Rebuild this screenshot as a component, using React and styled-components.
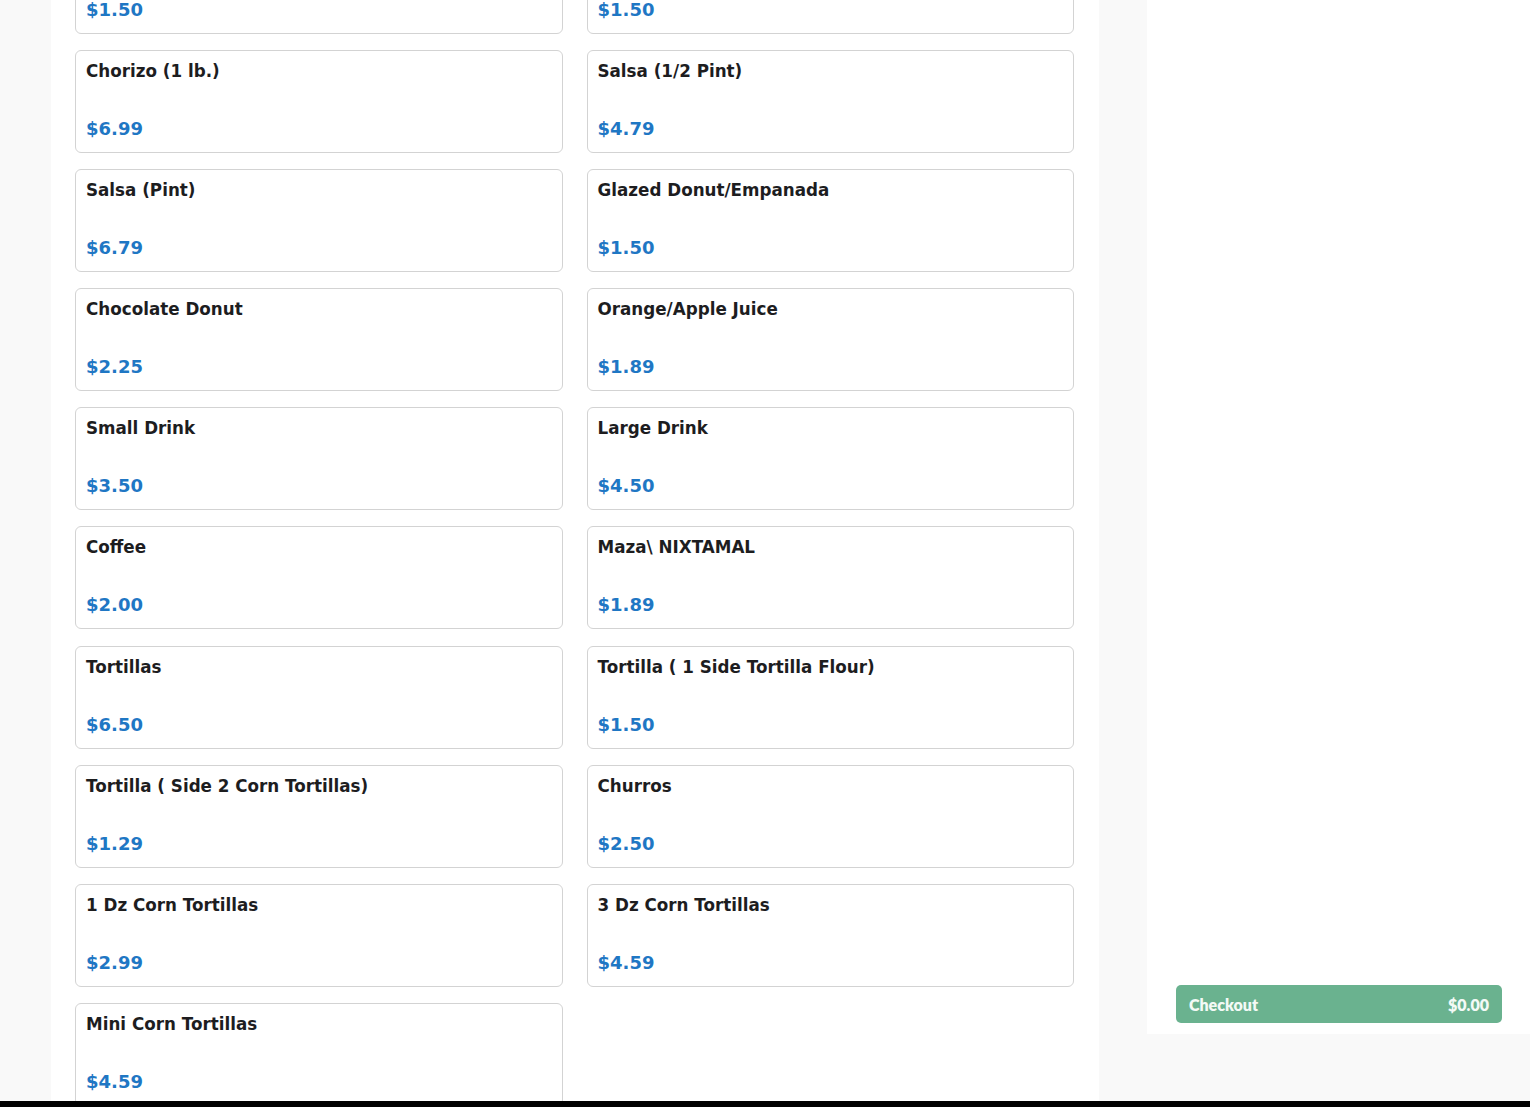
import React from "react";
import styled, { createGlobalStyle } from "styled-components";

const items = [
  { name: "Pan Dulce", price: "$1.50" },
  { name: "Bolillo", price: "$1.50" },
  { name: "Chorizo (1 lb.)", price: "$6.99" },
  { name: "Salsa (1/2 Pint)", price: "$4.79" },
  { name: "Salsa (Pint)", price: "$6.79" },
  { name: "Glazed Donut/Empanada", price: "$1.50" },
  { name: "Chocolate Donut", price: "$2.25" },
  { name: "Orange/Apple Juice", price: "$1.89" },
  { name: "Small Drink", price: "$3.50" },
  { name: "Large Drink", price: "$4.50" },
  { name: "Coffee", price: "$2.00" },
  { name: "Maza\\ NIXTAMAL", price: "$1.89" },
  { name: "Tortillas", price: "$6.50" },
  { name: "Tortilla ( 1 Side Tortilla Flour)", price: "$1.50" },
  { name: "Tortilla ( Side 2 Corn Tortillas)", price: "$1.29" },
  { name: "Churros", price: "$2.50" },
  { name: "1 Dz Corn Tortillas", price: "$2.99" },
  { name: "3 Dz Corn Tortillas", price: "$4.59" },
  { name: "Mini Corn Tortillas", price: "$4.59" },
];

export default function App() {
  return (
    <>
      <GlobalStyle />
      <Page>
        <Menu>
          <Grid>
            {items.map((item, i) => (
              <Card key={i}>
                <Title>{item.name}</Title>
                <Price>{item.price}</Price>
              </Card>
            ))}
          </Grid>
        </Menu>
        <Sidebar>
          <CheckoutButton>
            <span>Checkout</span>
            <span>$0.00</span>
          </CheckoutButton>
        </Sidebar>
      </Page>
      <BottomBar />
    </>
  );
}

const GlobalStyle = createGlobalStyle`
  html, body {
    margin: 0;
    padding: 0;
    height: 100%;
    overflow: hidden;
    background: #f9f9f9;
  }
  body {
    font-family: "DejaVu Sans", sans-serif;
  }
`;

const Page = styled.div`
  display: flex;
  align-items: flex-start;
  gap: 48px;
  padding-left: 51px;
  height: 1101px;
  overflow: hidden;
`;

const Menu = styled.main`
  width: 1048px;
  flex-shrink: 0;
  align-self: stretch;
  background: #ffffff;
  padding: 0 25px 0 24px;
  box-sizing: border-box;
`;

const Grid = styled.div`
  display: grid;
  grid-template-columns: 488px 487px;
  column-gap: 23.5px;
  row-gap: 16.1px;
  margin-top: -69px;
`;

const Card = styled.div`
  height: 103px;
  box-sizing: border-box;
  border: 1px solid #d3d3d3;
  border-radius: 6px;
  padding: 10px 10px 13px;
  display: flex;
  flex-direction: column;
  justify-content: space-between;
  background: #ffffff;
`;

const Title = styled.div`
  font-family: "DejaVu Sans", sans-serif;
  font-weight: bold;
  font-size: 16.75px;
  line-height: 20px;
  color: #1d1d1f;
`;

const Price = styled.div`
  font-family: "DejaVu Sans", sans-serif;
  font-weight: bold;
  font-size: 18px;
  line-height: 21px;
  color: #1f77c4;
`;

const Sidebar = styled.aside`
  width: 383px;
  height: 1034px;
  flex-shrink: 0;
  background: #ffffff;
  padding: 0 28px 11px 29px;
  box-sizing: border-box;
  display: flex;
  flex-direction: column;
  justify-content: flex-end;
`;

const CheckoutButton = styled.button`
  display: flex;
  justify-content: space-between;
  align-items: center;
  height: 38px;
  padding: 0 13px 0 13px;
  border: none;
  border-radius: 5px;
  background: #6ab28f;
  color: #f3faf6;
  font-family: Lato, "Open Sans", sans-serif;
  font-weight: 800;
  font-size: 16px;
  cursor: pointer;
`;

const BottomBar = styled.div`
  position: fixed;
  left: 0;
  right: 0;
  bottom: 0;
  height: 6px;
  background: #000000;
`;
